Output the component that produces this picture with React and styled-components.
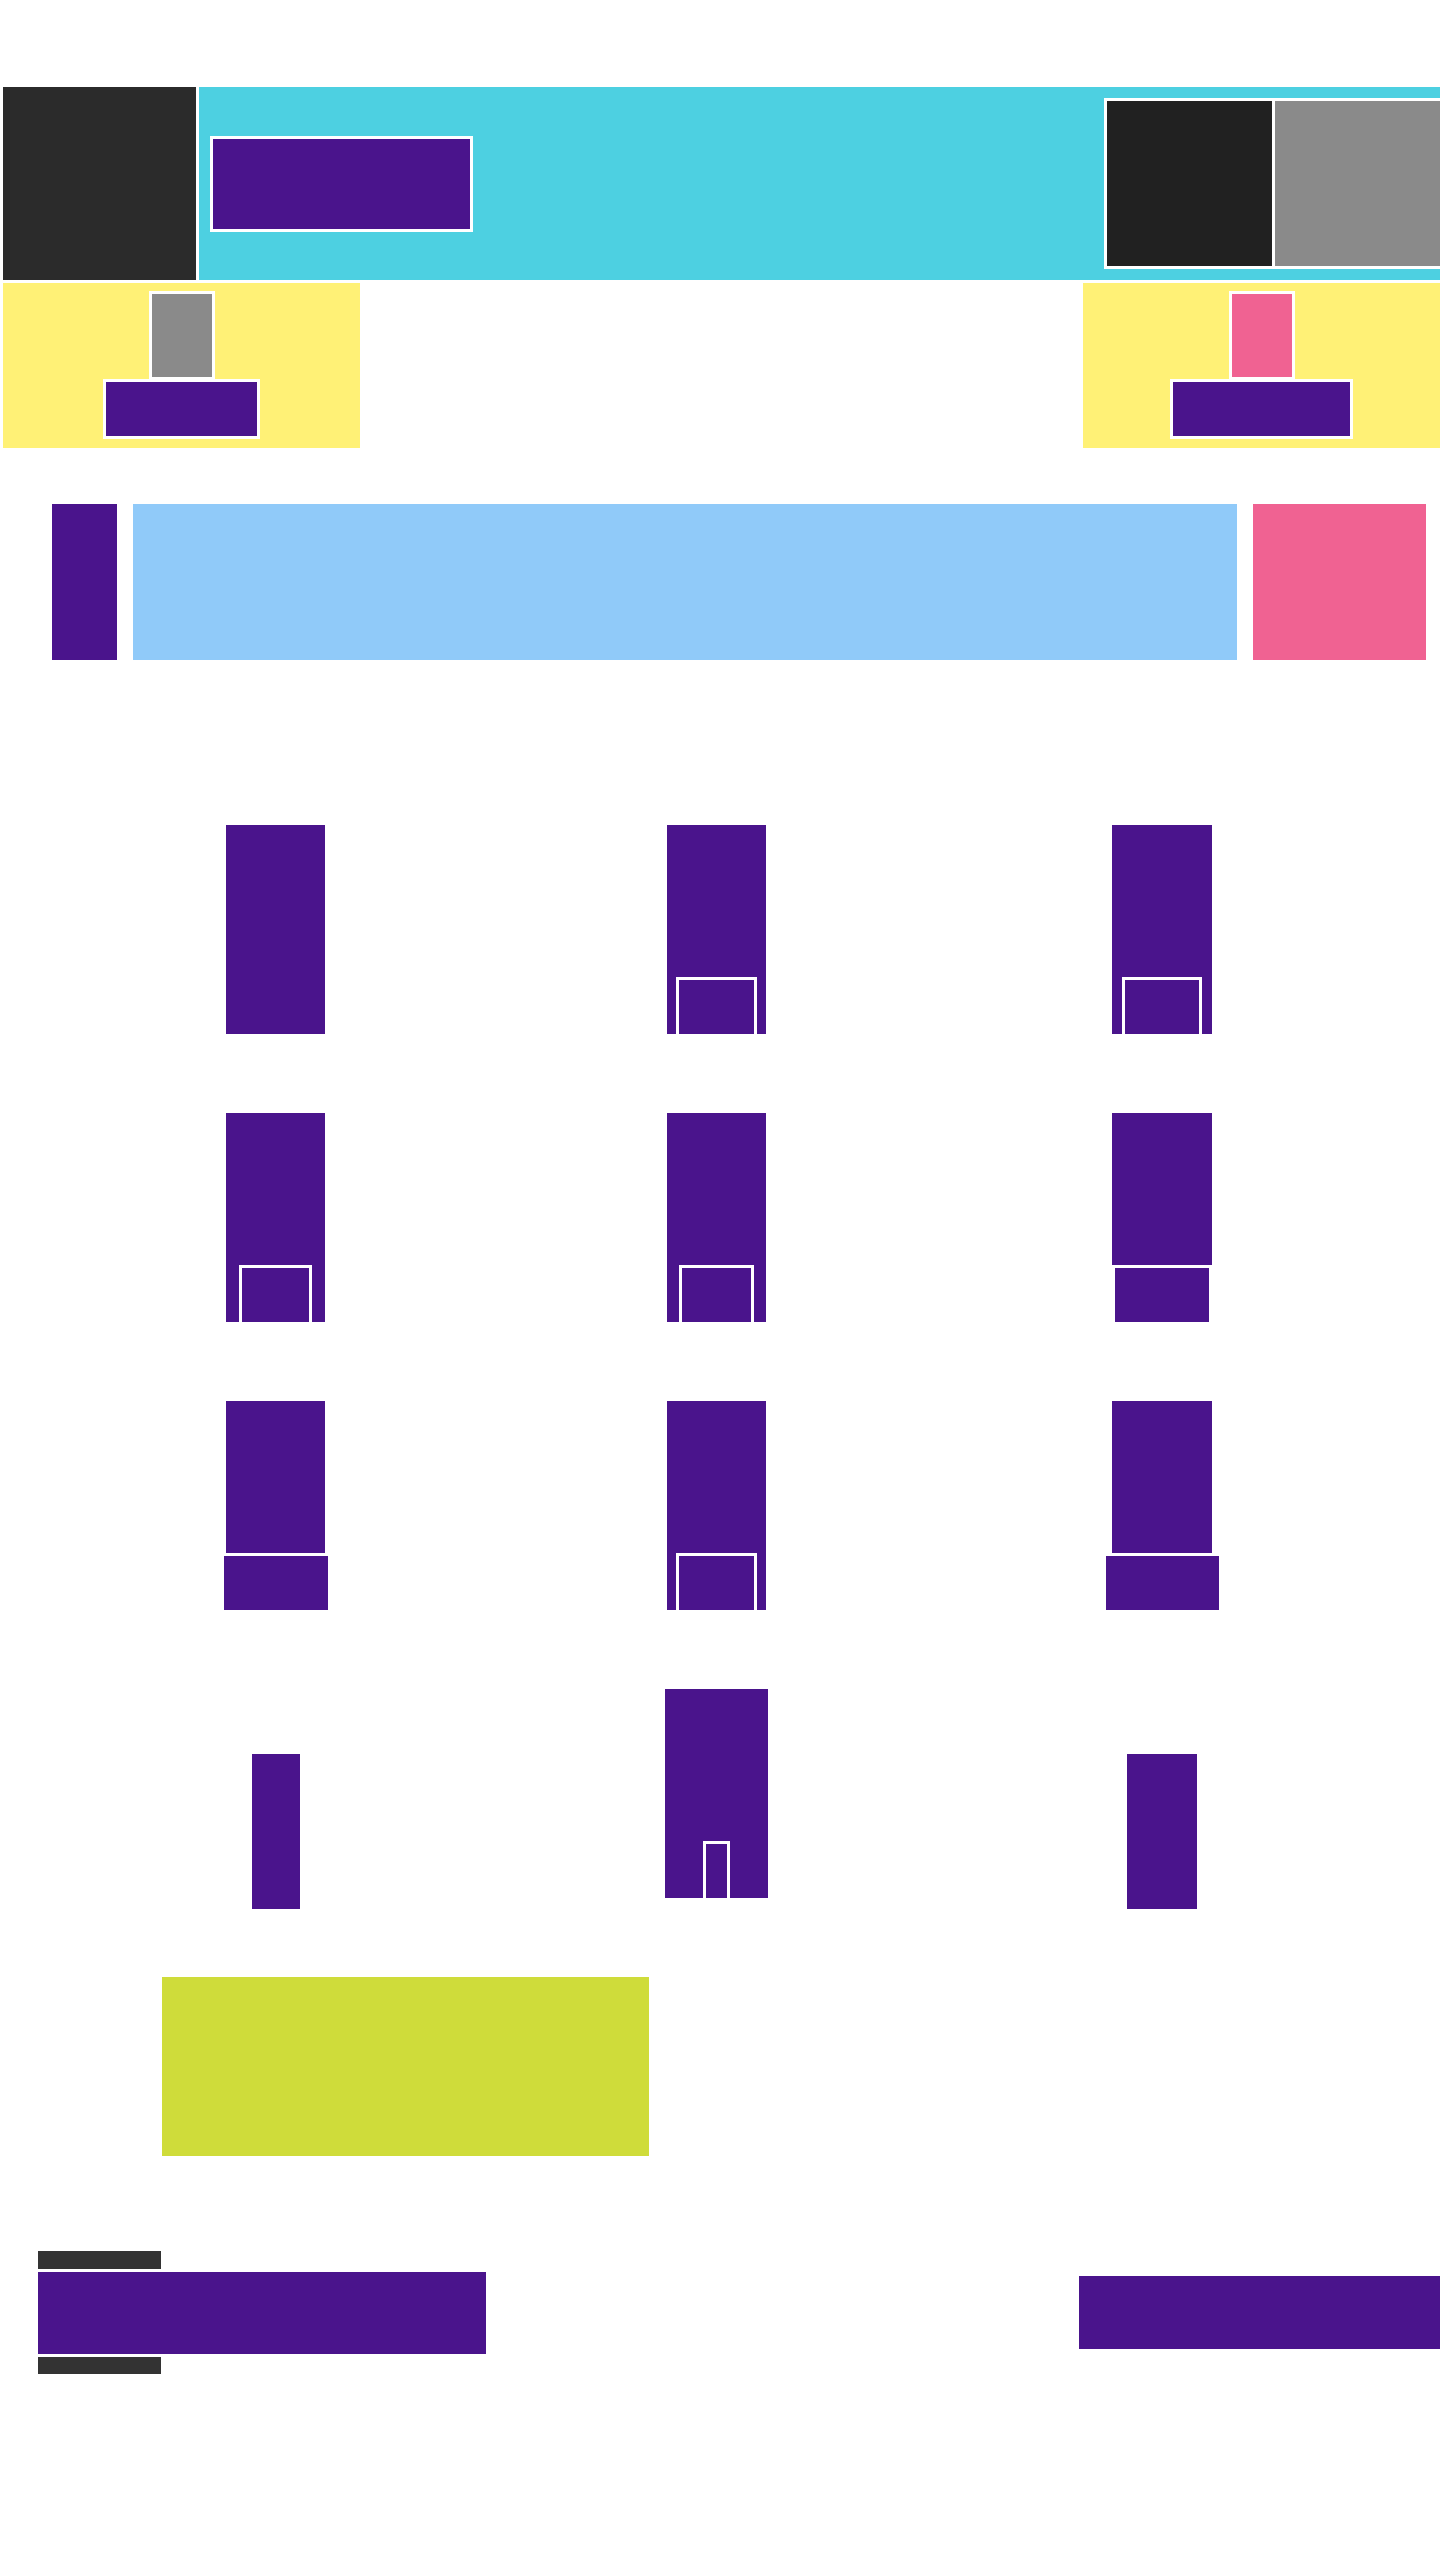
import React from "react";
import styled, { createGlobalStyle } from "styled-components";

const C = {
  purple: "#4a148c",
  cyan: "#4dd0e1",
  yellow: "#fff176",
  pink: "#f06292",
  sky: "#90caf9",
  lime: "#cfdc3a",
  gray: "#8a8a8a",
  ink: "#2b2b2b",
  coal: "#212121",
  bar: "#333333",
};

const GlobalStyle = createGlobalStyle`
  html, body { margin: 0; padding: 0; background: #ffffff; }
  body { font-family: "Liberation Sans", Arial, sans-serif; overflow-x: hidden; }
  * { box-sizing: border-box; }
`;

const Page = styled.div`
  width: 1440px;
  min-height: 2560px;
  padding-top: 87px;
  overflow: hidden;
`;

/* ---------- header ---------- */
const Header = styled.header`
  display: flex;
  gap: 3px;
  height: 193px;
  margin-left: 3px;
`;

const Brand = styled.div`
  width: 193px;
  flex-shrink: 0;
  background: ${C.ink};
`;

const HeaderBar = styled.div`
  flex: 1;
  display: flex;
  align-items: center;
  justify-content: space-between;
  padding-left: 11px;
  background: ${C.cyan};
`;

const NavButton = styled.div`
  width: 263px;
  height: 96px;
  border: 3px solid #fff;
  background: ${C.purple};
`;

const AccountGroup = styled.div`
  display: flex;
  gap: 3px;
  flex-shrink: 0;
  height: 171px;
  margin-right: -40px;
  border: 3px solid #fff;
  background: #fff;
`;

const AccountTile = styled.div`
  width: ${(p) => p.$w}px;
  background: ${(p) => p.$bg};
`;

/* ---------- promo panels ---------- */
const PanelRow = styled.section`
  display: flex;
  justify-content: space-between;
  height: 165px;
  margin: 3px 0 0 3px;
`;

const Panel = styled.div`
  width: 357px;
  display: flex;
  flex-direction: column;
  align-items: center;
  padding-top: 8px;
  background: ${C.yellow};
`;

const Swatch = styled.div`
  width: 66px;
  height: 89px;
  border: 3px solid #fff;
  background: ${(p) => p.$bg};
`;

const PanelButton = styled.div`
  width: ${(p) => p.$w}px;
  height: 60px;
  margin-top: -1px;
  border: 3px solid #fff;
  background: ${C.purple};
`;

/* ---------- search strip ---------- */
const Strip = styled.section`
  display: flex;
  gap: 16px;
  height: 156px;
  margin-top: 56px;
  padding-left: 52px;
`;

const StripBlock = styled.div`
  width: ${(p) => p.$w}px;
  flex-shrink: 0;
  background: ${(p) => p.$bg};
`;

/* ---------- product grid ---------- */
const Grid = styled.section`
  display: grid;
  grid-template-columns: 441px 441px 450px;
  grid-auto-rows: 209px;
  row-gap: 79px;
  justify-items: center;
  align-items: start;
  margin-top: 165px;
  padding-left: 55px;
`;

const Column = styled.div`
  width: ${(p) => p.$w || 99}px;
  height: ${(p) => p.$h || 209}px;
  margin-top: ${(p) => p.$top || 0}px;
  display: flex;
  flex-direction: column;
  justify-content: flex-end;
  align-items: center;
  overflow: hidden;
  background: ${C.purple};
`;

const Slot = styled.div`
  width: ${(p) => p.$w}px;
  height: 57px;
  border: 3px solid #fff;
  border-bottom: 0;
  background: ${C.purple};
`;

const Stack = styled.div`
  display: flex;
  flex-direction: column;
  align-items: center;
  height: 209px;
`;

const StackBody = styled.div`
  width: ${(p) => p.$w}px;
  height: 152px;
  background: ${C.purple};
`;

const StackFoot = styled.div`
  width: ${(p) => p.$w}px;
  height: 57px;
  border-top: 3px solid #fff;
  background: ${C.purple};
`;

/* ---------- feature ---------- */
const Feature = styled.section`
  width: 487px;
  height: 179px;
  margin: 79px 0 0 162px;
  background: ${C.lime};
`;

/* ---------- footer ---------- */
const Footer = styled.footer`
  display: flex;
  align-items: center;
  justify-content: space-between;
  margin-top: 95px;
  padding-left: 38px;
`;

const FooterStack = styled.div`
  display: flex;
  flex-direction: column;
  gap: 3px;
`;

const FooterBar = styled.div`
  width: 123px;
  height: ${(p) => p.$h}px;
  background: ${C.bar};
`;

const FooterBlock = styled.div`
  width: ${(p) => p.$w}px;
  height: ${(p) => p.$h}px;
  background: ${C.purple};
`;

export default function App() {
  return (
    <>
      <GlobalStyle />
      <Page>
        <Header>
          <Brand />
          <HeaderBar>
            <NavButton />
            <AccountGroup>
              <AccountTile $w={165} $bg={C.coal} />
              <AccountTile $w={202} $bg={C.gray} />
            </AccountGroup>
          </HeaderBar>
        </Header>

        <PanelRow>
          <Panel>
            <Swatch $bg={C.gray} />
            <PanelButton $w={157} />
          </Panel>
          <Panel>
            <Swatch $bg={C.pink} />
            <PanelButton $w={183} />
          </Panel>
        </PanelRow>

        <Strip>
          <StripBlock $w={65} $bg={C.purple} />
          <StripBlock $w={1104} $bg={C.sky} />
          <StripBlock $w={173} $bg={C.pink} />
        </Strip>

        <Grid>
          <Column />
          <Column>
            <Slot $w={81} />
          </Column>
          <Column $w={100}>
            <Slot $w={80} />
          </Column>

          <Column>
            <Slot $w={73} />
          </Column>
          <Column>
            <Slot $w={75} />
          </Column>
          <Column $w={100}>
            <Slot $w={100} />
          </Column>

          <Stack>
            <StackBody $w={99} />
            <StackFoot $w={104} />
          </Stack>
          <Column>
            <Slot $w={81} />
          </Column>
          <Stack>
            <StackBody $w={100} />
            <StackFoot $w={113} />
          </Stack>

          <Column $w={48} $h={155} $top={65} />
          <Column $w={103}>
            <Slot $w={27} />
          </Column>
          <Column $w={70} $h={155} $top={65} />
        </Grid>

        <Feature />

        <Footer>
          <FooterStack>
            <FooterBar $h={18} />
            <FooterBlock $w={448} $h={82} />
            <FooterBar $h={17} />
          </FooterStack>
          <FooterBlock $w={361} $h={73} />
        </Footer>
      </Page>
    </>
  );
}
